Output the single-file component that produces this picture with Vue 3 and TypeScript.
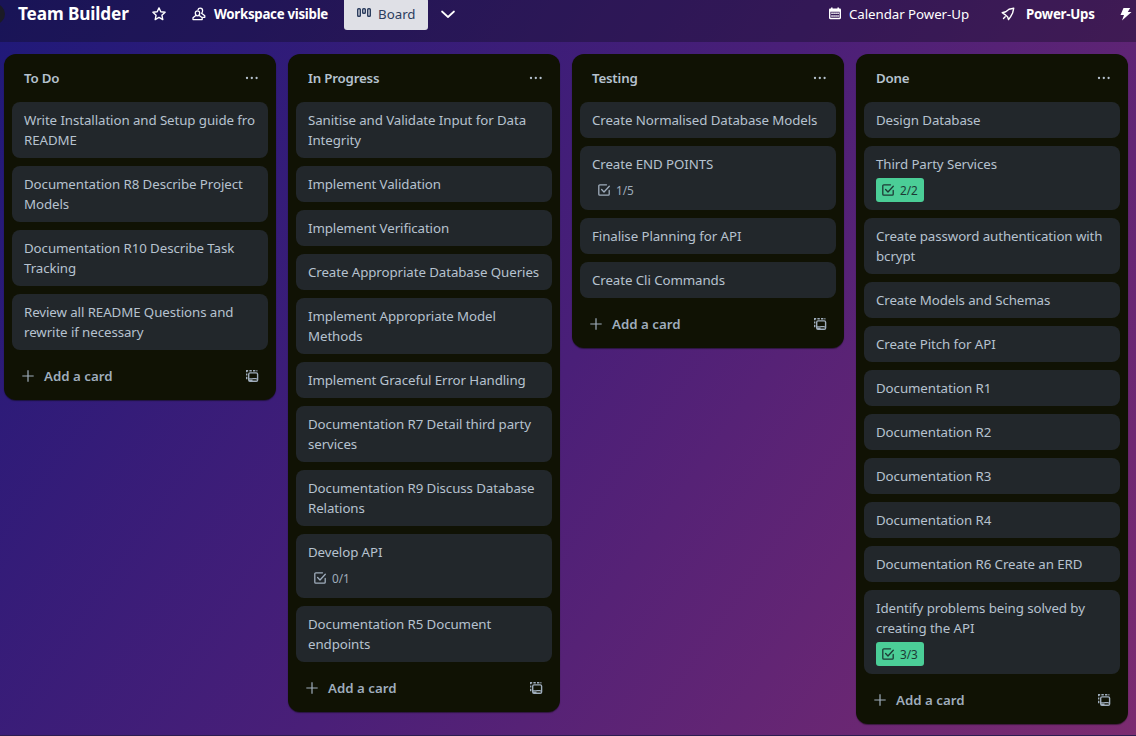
<script setup lang="ts">
interface Card {
  lines: string[]
  checks?: string
  done?: boolean
}
interface List {
  title: string
  cards: Card[]
}

const card = (...lines: string[]): Card => ({ lines })

const lists: List[] = [
  {
    title: 'To Do',
    cards: [
      card('Write Installation and Setup guide fro', 'README'),
      card('Documentation R8 Describe Project', 'Models'),
      card('Documentation R10 Describe Task', 'Tracking'),
      card('Review all README Questions and', 'rewrite if necessary'),
    ],
  },
  {
    title: 'In Progress',
    cards: [
      card('Sanitise and Validate Input for Data', 'Integrity'),
      card('Implement Validation'),
      card('Implement Verification'),
      card('Create Appropriate Database Queries'),
      card('Implement Appropriate Model', 'Methods'),
      card('Implement Graceful Error Handling'),
      card('Documentation R7 Detail third party', 'services'),
      card('Documentation R9 Discuss Database', 'Relations'),
      { lines: ['Develop API'], checks: '0/1' },
      card('Documentation R5 Document', 'endpoints'),
    ],
  },
  {
    title: 'Testing',
    cards: [
      card('Create Normalised Database Models'),
      { lines: ['Create END POINTS'], checks: '1/5' },
      card('Finalise Planning for API'),
      card('Create Cli Commands'),
    ],
  },
  {
    title: 'Done',
    cards: [
      card('Design Database'),
      { lines: ['Third Party Services'], checks: '2/2', done: true },
      card('Create password authentication with', 'bcrypt'),
      card('Create Models and Schemas'),
      card('Create Pitch for API'),
      card('Documentation R1'),
      card('Documentation R2'),
      card('Documentation R3'),
      card('Documentation R4'),
      card('Documentation R6 Create an ERD'),
      { lines: ['Identify problems being solved by', 'creating the API'], checks: '3/3', done: true },
    ],
  },
]
</script>

<template>
  <div class="board">
    <header class="bar">
      <span class="avatar"></span>
      <h1 class="name">Team Builder</h1>
      <svg class="star" width="16" height="16" viewBox="0 0 16 16">
        <path d="M8 1.9 9.8 5.8 14.1 6.3 10.9 9.2 11.8 13.6 8 11.4 4.2 13.6 5.1 9.2 1.9 6.3 6.2 5.8Z" fill="none" stroke="currentColor" stroke-width="1.4" stroke-linejoin="round" />
      </svg>
      <div class="visibility">
        <svg width="16" height="16" viewBox="0 0 16 16" fill="none" stroke="currentColor" stroke-width="1.3" stroke-linejoin="round">
          <path d="M6.500 4.800a2.200 2.200 0 0 1 2.200 2.300c0 1.600-1 2.700-2.200 2.700S4.300 8.700 4.300 7.100a2.200 2.200 0 0 1 2.200-2.300ZM4.800 9.400 2 11.700v1.900h9.200v-1.900L8.300 9.400" />
          <path d="M6.900 4c.3-1.200 1.200-1.900 2.300-1.900 1.400 0 2.400 1.100 2.400 2.600 0 1-.4 1.900-1 2.500l3.200 2.600v1.500h-2.500" />
        </svg>
        <span>Workspace visible</span>
      </div>
      <div class="view">
        <svg width="16" height="16" viewBox="0 0 16 16" fill="none" stroke="currentColor" stroke-width="1.4">
          <rect x="1.700" y="2.700" width="2.600" height="7.600" rx=".8" />
          <rect x="6.700" y="2.700" width="2.600" height="4.600" rx=".8" />
          <rect x="11.700" y="2.700" width="2.600" height="7.600" rx=".8" />
        </svg>
        <span>Board</span>
      </div>
      <svg class="chevron" width="16" height="16" viewBox="0 0 16 16">
        <path d="m2 5.500 6 5.500 6-5.500" fill="none" stroke="currentColor" stroke-width="1.7" stroke-linecap="round" stroke-linejoin="round" />
      </svg>
      <div class="calendar">
        <svg width="14" height="14" viewBox="0 0 14 14" fill="currentColor">
          <path fill-rule="evenodd" d="M3 .4h1.600V1.600h4.800V.4H11v1.200h.6c.9 0 1.400.5 1.400 1.300v7.900c0 .9-.5 1.400-1.400 1.400H2.400C1.500 12.200 1 11.700 1 10.800V2.900C1 2.100 1.500 1.600 2.400 1.600H3ZM2.400 4.700v6h9.200v-6Z" />
          <path d="M3.300 5.400h1.500V7H3.300zM5.300 5.400h1.500V7H5.300zM7.300 5.400h1.500V7H7.300zM9.300 5.400h1.500V7H9.300zM3.300 8.200h1.500v1.600H3.300zM5.300 8.200h1.500v1.600H5.300zM7.300 8.200h1.500v1.600H7.300zM9.300 8.200h1.500v1.600H9.300z" />
        </svg>
        <span>Calendar Power-Up</span>
      </div>
      <div class="powerups">
        <svg width="16" height="16" viewBox="0 0 16 16" fill="none" stroke="currentColor" stroke-width="1.4" stroke-linejoin="round">
          <path d="M13.700 2.300 9 3.200 5.800 5.800 2.200 6.700 5 8.600 7.700 11 8.500 13.600 10.500 10.800 12.600 7Z" />
          <path d="m5.200 10.700-1.700 1.700" stroke-linecap="round" />
        </svg>
        <span>Power-Ups</span>
      </div>
      <svg class="bolt" width="16" height="16" viewBox="0 0 16 16">
        <path d="M5.500 2h6.700L9.800 6h3.700L4 14.500 6 9H2.500Z" fill="currentColor" />
      </svg>
    </header>

    <main class="lists">
      <section v-for="list in lists" :key="list.title" class="list">
        <div class="head">
          <h2>{{ list.title }}</h2>
          <svg width="16" height="16" viewBox="0 0 16 16" fill="currentColor">
            <circle cx="3" cy="8" r="1.150" /><circle cx="7.800" cy="8" r="1.150" /><circle cx="12.600" cy="8" r="1.150" />
          </svg>
        </div>
        <div class="cards">
          <article v-for="item in list.cards" :key="item.lines[0]" class="card">
            <div v-for="line in item.lines" :key="line" class="line">{{ line }}</div>
            <div v-if="item.checks" class="badge" :class="{ done: item.done }">
              <svg width="16" height="16" viewBox="0 0 16 16" fill="none" stroke="currentColor" stroke-width="1.300" stroke-linejoin="round" stroke-linecap="round">
                <path d="M10.500 2.800H3.800a1 1 0 0 0-1 1v8.400a1 1 0 0 0 1 1h8.400a1 1 0 0 0 1-1V8.500" />
                <path d="M5.600 7.500 8 10l5.300-5.800" />
              </svg>
              <span>{{ item.checks }}</span>
            </div>
          </article>
        </div>
        <div class="foot">
          <svg class="plus" width="16" height="16" viewBox="0 0 16 16">
            <path d="M8 2.300v11.400M2.300 8h11.400" stroke="currentColor" stroke-width="1.200" />
          </svg>
          <span>Add a card</span>
          <svg class="template" width="16" height="16" viewBox="0 0 16 16" fill="none" stroke="currentColor" stroke-width="1.400">
            <path d="M2.700 4.200V2.700h1.500M5.400 2.700h2.400M9 2.700h2.400M12.400 2.700h1M2.700 5.400v2.200M2.700 8.800v2.400" />
            <rect x="4.700" y="4.900" width="8.900" height="8.300" rx="1.300" />
            <path d="M4.700 10.900h3.800M12 10.900h1.600M8.500 10.600h3.600" />
            <path d="M5 12.400h3.500" />
          </svg>
        </div>
      </section>
    </main>
  </div>
</template>

<style>
body {
  margin: 0;
  overflow: hidden;
}
</style>

<style scoped>
.board {
  width: 1136px;
  height: 736px;
  overflow: hidden;
  box-sizing: border-box;
  border-bottom: 1px solid #2c1d51;
  background: linear-gradient(125deg, #1f1979 0%, #4a1f78 50%, #7b2b70 100%);
  font-family: "Noto Sans", "Open Sans", sans-serif;
  font-size: 13.3px;
  line-height: 20px;
  color: #b6c2cf;
}
svg {
  display: block;
  flex: none;
}
.bar {
  display: flex;
  align-items: center;
  height: 42px;
  padding-bottom: 14px;
  box-sizing: border-box;
  background: rgba(16, 14, 31, 0.38);
  color: #fff;
  white-space: nowrap;
}
.avatar {
  width: 20px;
  height: 20px;
  margin-left: -15px;
  border-radius: 50%;
  background: #1b1b25;
}
.name {
  width: 120px;
  margin: 0 0 0 13px;
  font-size: 17.2px;
  font-weight: 700;
  letter-spacing: -0.12px;
}
.star {
  margin-left: 13px;
}
.visibility {
  display: flex;
  align-items: center;
  gap: 7px;
  width: 137px;
  margin-left: 24px;
  font-weight: 700;
  letter-spacing: -0.29px;
}
.view {
  display: flex;
  align-items: center;
  gap: 6px;
  width: 84px;
  height: 32px;
  margin-left: 16px;
  padding-left: 12px;
  box-sizing: border-box;
  border-radius: 3px;
  background: #dfe0e6;
  color: #2b3d5e;
}
.chevron {
  margin-left: 12px;
}
.calendar {
  display: flex;
  align-items: center;
  gap: 7px;
  width: 142px;
  margin-left: auto;
  letter-spacing: -0.06px;
}
.powerups {
  display: flex;
  align-items: center;
  gap: 10px;
  width: 96px;
  margin-left: 30px;
  font-weight: 700;
  letter-spacing: -0.25px;
}
.bolt {
  margin: 0 2px 0 22px;
}
.lists {
  display: flex;
  align-items: flex-start;
  gap: 12px;
  padding: 12px 0 0 4px;
}
.list {
  width: 272px;
  flex: none;
  border-radius: 12px;
  background: #101204;
  box-shadow: 0 1px 1px rgba(9, 10, 12, 0.5);
}
.head {
  display: flex;
  align-items: center;
  justify-content: space-between;
  height: 48px;
  padding: 0 16px 0 20px;
}
.head h2 {
  margin: 0;
  font-size: 13.3px;
  font-weight: 600;
  letter-spacing: -0.2px;
}
.cards {
  display: flex;
  flex-direction: column;
  gap: 8px;
  padding: 0 8px;
}
.card {
  padding: 8px 12px;
  border-radius: 8px;
  background: #22272b;
  white-space: nowrap;
  letter-spacing: -0.085px;
}
.badge {
  display: flex;
  align-items: center;
  gap: 4px;
  width: 48px;
  height: 24px;
  margin-top: 4px;
  padding-left: 4px;
  box-sizing: border-box;
  border-radius: 3px;
  font-size: 11.8px;
  color: #9fadbc;
}
.badge.done {
  background: #4bce97;
  color: #1d3a35;
}
.foot {
  display: flex;
  align-items: center;
  height: 32px;
  padding: 10px 16px 8px;
  font-weight: 600;
  color: #9fadbc;
}
.foot span {
  margin-left: 8px;
}
.template {
  margin-left: auto;
}
</style>
